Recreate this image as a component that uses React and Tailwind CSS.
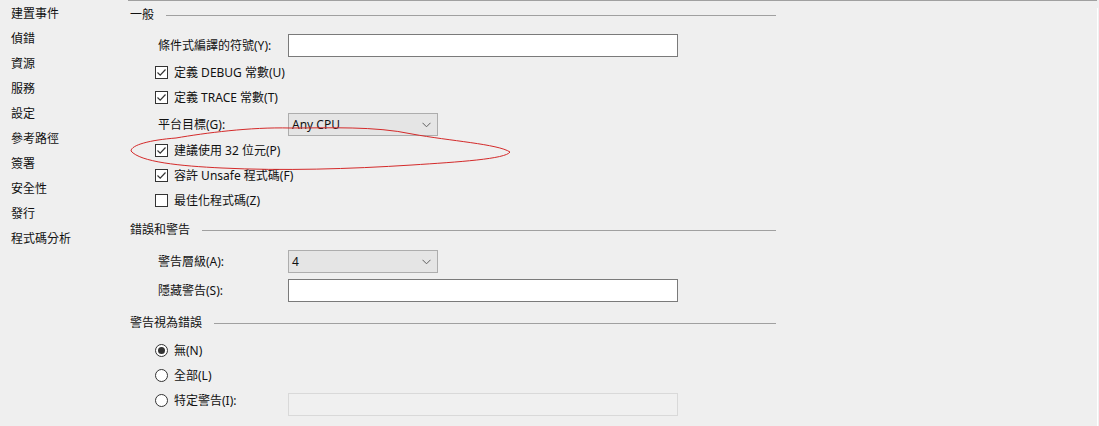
import React from "react";

const font = { fontFamily: '"Noto Sans", "Noto Sans CJK TC", sans-serif' };

const navItems = ["建置事件", "偵錯", "資源", "服務", "設定", "參考路徑", "簽署", "安全性", "發行", "程式碼分析"];

function Header({ title, className = "" }) {
  return (
    <div className={"flex items-center h-[28px] w-[648px] pl-[2px] " + className}>
      <span className="leading-none">{title}</span>
      <div className="flex-1 h-px bg-[#a0a0a0] ml-[12px]" />
    </div>
  );
}

function Check({ checked, label, className = "" }) {
  return (
    <div className={"flex items-center h-[25px] pl-[27px] " + className}>
      <span className="w-[13px] h-[13px] border border-[#333] bg-white flex items-center justify-center">
        {checked && (
          <svg width="11" height="11" viewBox="0 0 11 11">
            <path d="M1.5 5.5 L4.2 8.2 L9.5 2.5" fill="none" stroke="#333" strokeWidth="1.2" />
          </svg>
        )}
      </span>
      <span className="ml-[6px] leading-none">{label}</span>
    </div>
  );
}

function Radio({ checked, label, children, className = "" }) {
  return (
    <div className={"flex items-center h-[25px] pl-[27px] " + className}>
      <span className="w-[13px] h-[13px] rounded-full border border-[#333] bg-white flex items-center justify-center">
        {checked && <span className="w-[7px] h-[7px] rounded-full bg-[#333]" />}
      </span>
      <span className="ml-[6px] leading-none w-[114px]">{label}</span>
      {children}
    </div>
  );
}

function Field({ label, children, className = "" }) {
  return (
    <div className={"flex items-center h-[23px] pl-[30px] " + className}>
      <span className="w-[130px] leading-none">{label}</span>
      {children}
    </div>
  );
}

function TextBox({ disabled }) {
  return disabled ? (
    <div className="w-[390px] h-[23px] border border-[#d9d9d9] bg-[#f0f0f0] mt-[8px]" />
  ) : (
    <div className="w-[390px] h-[23px] border border-[#7a7a7a] bg-white" />
  );
}

function Select({ value }) {
  return (
    <div className="w-[150px] h-[23px] border border-[#adadad] bg-[#e5e5e5] flex items-center justify-between pl-[3px] pr-[6px]">
      <span className="leading-none">{value}</span>
      <svg width="9" height="6" viewBox="0 0 9 6">
        <path d="M0.5 0.8 L4.5 4.8 L8.5 0.8" fill="none" stroke="#606060" strokeWidth="1" />
      </svg>
    </div>
  );
}

export default function App() {
  return (
    <div className="relative w-[1099px] h-[426px] bg-[#efefef] text-[12px] text-[#111] flex overflow-hidden" style={font}>
      <div className="w-[128px] shrink-0 pt-px pl-[11px]">
        {navItems.map((n) => (
          <div key={n} className="h-[25px] flex items-center leading-none">{n}</div>
        ))}
      </div>
      <div className="flex-1 border-t border-[#a0a0a0] flex flex-col">
        <Header title="一般" />
        <Field label="條件式編譯的符號(Y):" className="mt-[5px]">
          <TextBox />
        </Field>
        <Check checked label="定義 DEBUG 常數(U)" className="mt-[3px]" />
        <Check checked label="定義 TRACE 常數(T)" />
        <Field label="平台目標(G):" className="mt-[3px]">
          <Select value="Any CPU" />
        </Field>
        <Check checked label="建議使用 32 位元(P)" className="mt-[2px]" />
        <Check checked label="容許 Unsafe 程式碼(F)" />
        <Check label="最佳化程式碼(Z)" />
        <Header title="錯誤和警告" className="mt-[3px]" />
        <Field label="警告層級(A):" className="mt-[6px]">
          <Select value="4" />
        </Field>
        <Field label="隱藏警告(S):" className="mt-[6px]">
          <TextBox />
        </Field>
        <Header title="警告視為錯誤" className="mt-[7px]" />
        <Radio checked label="無(N)" className="mt-px" />
        <Radio label="全部(L)" />
        <Radio label="特定警告(I):">
          <TextBox disabled />
        </Radio>
      </div>
      <div className="w-px bg-white mt-[8px] mr-[1px]" />
      <svg className="absolute left-0 top-0 pointer-events-none" width="1099" height="426">
        <path
          d="M176 138 C205 133 250 127 290 128 C330 128 375 126 412 134 C450 141 498 144 510 152 C506 159 458 162 412 165 C350 169 282 171 222 168 C180 166 140 162 131 151 C131 145 150 140 176 138 Z"
          fill="none"
          stroke="#d42a2a"
          strokeWidth="1"
        />
      </svg>
    </div>
  );
}
